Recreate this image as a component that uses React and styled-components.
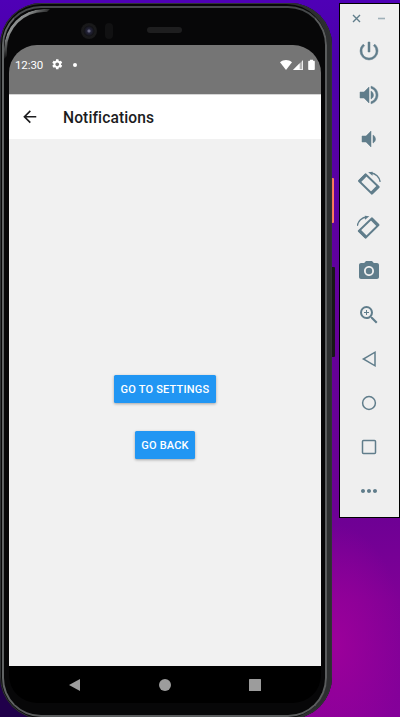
import React from 'react';
import styled, { createGlobalStyle } from 'styled-components';
import {
  MdArrowBack, MdSettings, MdPowerSettingsNew, MdVolumeUp, MdVolumeDown,
  MdCameraAlt, MdZoomIn, MdMoreHoriz,
} from 'react-icons/md';

const GlobalStyle = createGlobalStyle`
  * { box-sizing: border-box; }
  body { margin: 0; font-family: Roboto, sans-serif; overflow: hidden; }
`;

const Desktop = styled.div`
  display: flex;
  align-items: flex-start;
  gap: 7px;
  width: 400px;
  height: 717px;
  padding-top: 3px;
  overflow: hidden;
  background:
    linear-gradient(90deg, #20004a 0 60px, rgba(32, 0, 74, 0) 90px) 0 100% / 100px 60px no-repeat,
    radial-gradient(ellipse 70px 120px at 335px 645px, rgba(160, 0, 155, 0.85), rgba(160, 0, 155, 0)),
    linear-gradient(180deg, #4f00b6 0, #4b00aa 60px, #5c00a2 200px, #640098 330px, #6c0094 510px, #800096 600px, #85009a 717px);
`;

const PhoneWrap = styled.div`
  position: relative;
  flex: none;
  width: 332px;
`;

const SideKey = styled.div`
  position: absolute;
  left: 329px;
  top: ${(p) => p.$top}px;
  width: ${(p) => p.$width}px;
  height: ${(p) => p.$height}px;
  border-radius: 0 1px 1px 0;
  background: ${(p) => p.$color};
`;

const Phone = styled.div`
  position: relative;
  display: flex;
  flex-direction: column;
  height: 716px;
  padding: 0 11px 0 9px;
  border-radius: 42px;
  background: #070708;
  overflow: hidden;
  box-shadow: inset 0 0 0 1px #303335, inset -4px 0 0 1px #2c2e2f;
  &::after {
    content: '';
    position: absolute;
    inset: 3px 5px 2px 2px;
    border: 2px solid #56595a;
    border-color: #45484a #5a5c5d #5a5c5d #606364;
    border-radius: 39px;
    pointer-events: none;
  }
`;

const CornerShine = styled.div`
  position: absolute;
  left: 4px;
  top: 6px;
  width: 46px;
  height: 50px;
  border: 3px solid transparent;
  border-top-color: #8b8e8e;
  border-left-color: #8b8e8e;
  border-radius: 40px 0 0 0;
  mask-image: linear-gradient(135deg, #000 30%, transparent 55%);
`;

const Bezel = styled.div`
  display: flex;
  align-items: center;
  height: 42px;
  padding: 13px 0 0 72px;
  flex: none;
`;

const Lens = styled.div`
  width: 16px;
  height: 16px;
  border-radius: 50%;
  background: radial-gradient(circle, #65657e 0 1px, #24243a 2px, #121216 5px, #1a1a1b 6px, #171718 8px);
`;

const Sensor = styled.div`
  width: 8px;
  height: 16px;
  margin-left: 8px;
  border-radius: 4px;
  background: #111112;
`;

const Speaker = styled.div`
  width: 35px;
  height: 6px;
  margin: -1px 0 0 34px;
  border-radius: 3px;
  background: #1e1e1f;
`;

const Screen = styled.div`
  display: flex;
  flex-direction: column;
  height: 658px;
  border-radius: 28px;
  overflow: hidden;
  background: #000;
  flex: none;
`;

const StatusBar = styled.div`
  display: flex;
  justify-content: space-between;
  height: 49px;
  padding: 12px 5px 0 6px;
  background: #757575;
  color: #fff;
`;

const StatusGroup = styled.div`
  display: flex;
  align-items: center;
  height: 15px;
`;

const Clock = styled.span`
  width: 28px;
  margin: 1px 8px 0 0;
  font-size: 11.5px;
  line-height: 15px;
  letter-spacing: -0.1px;
  white-space: nowrap;
`;

const Dot = styled.span`
  width: 4px;
  height: 4px;
  margin-left: 9.5px;
  border-radius: 50%;
  background: #fff;
`;

const Header = styled.header`
  display: flex;
  align-items: center;
  height: 45px;
  padding: 0 0 0 10.5px;
  border-top: 1px solid #d5d5d5;
  background: #fff;
  color: #1c1c1e;
`;

const Title = styled.h1`
  margin: 2px 0 0 24px;
  font-size: 15.6px;
  font-weight: 500;
  letter-spacing: 0.1px;
  line-height: 20px;
`;

const Content = styled.main`
  display: flex;
  flex-direction: column;
  align-items: center;
  justify-content: center;
  gap: 28px;
  height: 527px;
  padding-top: 29px;
  background: #f1f1f1;
`;

const Button = styled.button`
  width: ${(p) => p.$width}px;
  height: 28px;
  padding: 1px 0 0;
  border: 0;
  border-radius: 1.5px;
  background: #2196f3;
  color: #fff;
  font: 500 11px/27px Roboto, sans-serif;
  letter-spacing: 0.2px;
  white-space: nowrap;
  box-shadow: 0 1px 3px rgba(0, 0, 0, 0.32);
`;

const NavBar = styled.nav`
  display: flex;
  align-items: center;
  justify-content: space-between;
  height: 37px;
  padding: 1px 60px 0 58px;
`;

const ToolPanel = styled.aside`
  display: flex;
  flex-direction: column;
  align-items: center;
  width: 61px;
  height: 515px;
  padding-right: 1px;
  flex: none;
  border: 1px solid #000;
  background: #efefef;
  color: #607d8b;
`;

const WindowControls = styled.div`
  display: flex;
  align-items: center;
  justify-content: space-between;
  width: 34px;
  height: 25px;
  padding-top: 3px;
`;

const Tool = styled.div`
  display: flex;
  align-items: center;
  justify-content: center;
  width: 100%;
  height: 44px;
  svg { display: block; }
`;

const BoldIcon = styled.span`
  svg { stroke-width: 0.5px; }
  path[fill='none'] { stroke: none; }
`;

const RotateGlyph = ({ mirrored }) => (
  <svg width="24" height="24" viewBox="0 0 24 24" fill="none" stroke="currentColor">
    <g transform={mirrored ? 'translate(23.5 0) scale(-1 1)' : undefined}>
      <path d="M8.5 3.3 2 10l13 12.700 6.700-6.700z" strokeWidth="1.900" strokeLinejoin="round" />
      <path d="M9.300 3.700 2.600 10.400M21.200 15.300l-6.700 6.700" strokeWidth="3" />
      <path d="M13.500 2c5.200.3 9 4 9.700 8.800" strokeWidth="1.400" />
      <path d="M11.200 1.200 15.700.7l-.2 4z" fill="currentColor" stroke="none" />
    </g>
  </svg>
);

const OutlineGlyph = ({ children }) => (
  <svg width="24" height="24" viewBox="0 0 24 24" fill="none" stroke="currentColor" strokeWidth="1.5">
    {children}
  </svg>
);

const tools = [
  <BoldIcon><MdPowerSettingsNew size={24} /></BoldIcon>,
  <BoldIcon><MdVolumeUp size={24} /></BoldIcon>,
  <BoldIcon><MdVolumeDown size={24} /></BoldIcon>,
  <RotateGlyph />,
  <RotateGlyph mirrored />,
  <MdCameraAlt size={24} />,
  <MdZoomIn size={24} />,
  <OutlineGlyph><path d="M18 5.2v13.6L6.4 12z" /></OutlineGlyph>,
  <OutlineGlyph><circle cx="12" cy="12" r="6.4" /></OutlineGlyph>,
  <OutlineGlyph><rect x="5.5" y="5.5" width="13" height="13" rx="1" /></OutlineGlyph>,
  <MdMoreHoriz size={24} />,
];

const StatusIcons = () => (
  <svg width="36" height="12" viewBox="0 0 36 12" fill="#fff">
    <path d="M0 3.2C3.6.3 8.4.3 12 3.2L6 11z" />
    <path d="M13 11 22.8 1.2V11z" opacity=".45" />
    <path d="M13 11 19.7 4.3V11zM22 2l.8-.8V11H22zM19.7 10.2h3v.8h-3z" />
    <path d="M30 .7h3v1h.8c.6 0 1 .4 1 1V10c0 .6-.4 1-1 1h-4.6c-.6 0-1-.4-1-1V2.7c0-.6.4-1 1-1h.8z" />
  </svg>
);

export default function App() {
  return (
    <>
      <GlobalStyle />
      <Desktop>
        <PhoneWrap>
          <SideKey $top={175} $width={5} $height={45} $color="linear-gradient(90deg, #d95f50, #ff8060)" />
          <SideKey $top={264} $width={6} $height={90} $color="#171717" />
          <Phone>
            <Bezel>
              <Lens />
              <Sensor />
              <Speaker />
            </Bezel>
            <Screen>
              <StatusBar>
                <StatusGroup>
                  <Clock>12:30</Clock>
                  <MdSettings size={12.5} />
                  <Dot />
                </StatusGroup>
                <StatusGroup>
                  <StatusIcons />
                </StatusGroup>
              </StatusBar>
              <Header>
                <MdArrowBack size={19.5} />
                <Title>Notifications</Title>
              </Header>
              <Content>
                <Button $width={102}>GO TO SETTINGS</Button>
                <Button $width={60}>GO BACK</Button>
              </Content>
              <NavBar>
                <svg width="14" height="12" viewBox="0 0 14 12" fill="#9c9c9c"><path d="M13 0v12L2 6z" /></svg>
                <svg width="12" height="12" viewBox="0 0 12 12" fill="#9c9c9c"><circle cx="6" cy="6" r="6" /></svg>
                <svg width="12" height="12" viewBox="0 0 12 12" fill="#9c9c9c"><rect width="12" height="12" rx=".5" /></svg>
              </NavBar>
            </Screen>
            <CornerShine />
          </Phone>
        </PhoneWrap>
        <ToolPanel>
          <WindowControls>
            <svg width="9" height="9" viewBox="0 0 9 9" stroke="currentColor" strokeWidth="1.4"><path d="M1 1l7 7M8 1 1 8" /></svg>
            <svg width="9" height="9" viewBox="0 0 9 9" stroke="#9fb0b8" strokeWidth="1.6"><path d="M1 4.5h7" /></svg>
          </WindowControls>
          {tools.map((icon, i) => <Tool key={i}>{icon}</Tool>)}
        </ToolPanel>
      </Desktop>
    </>
  );
}
